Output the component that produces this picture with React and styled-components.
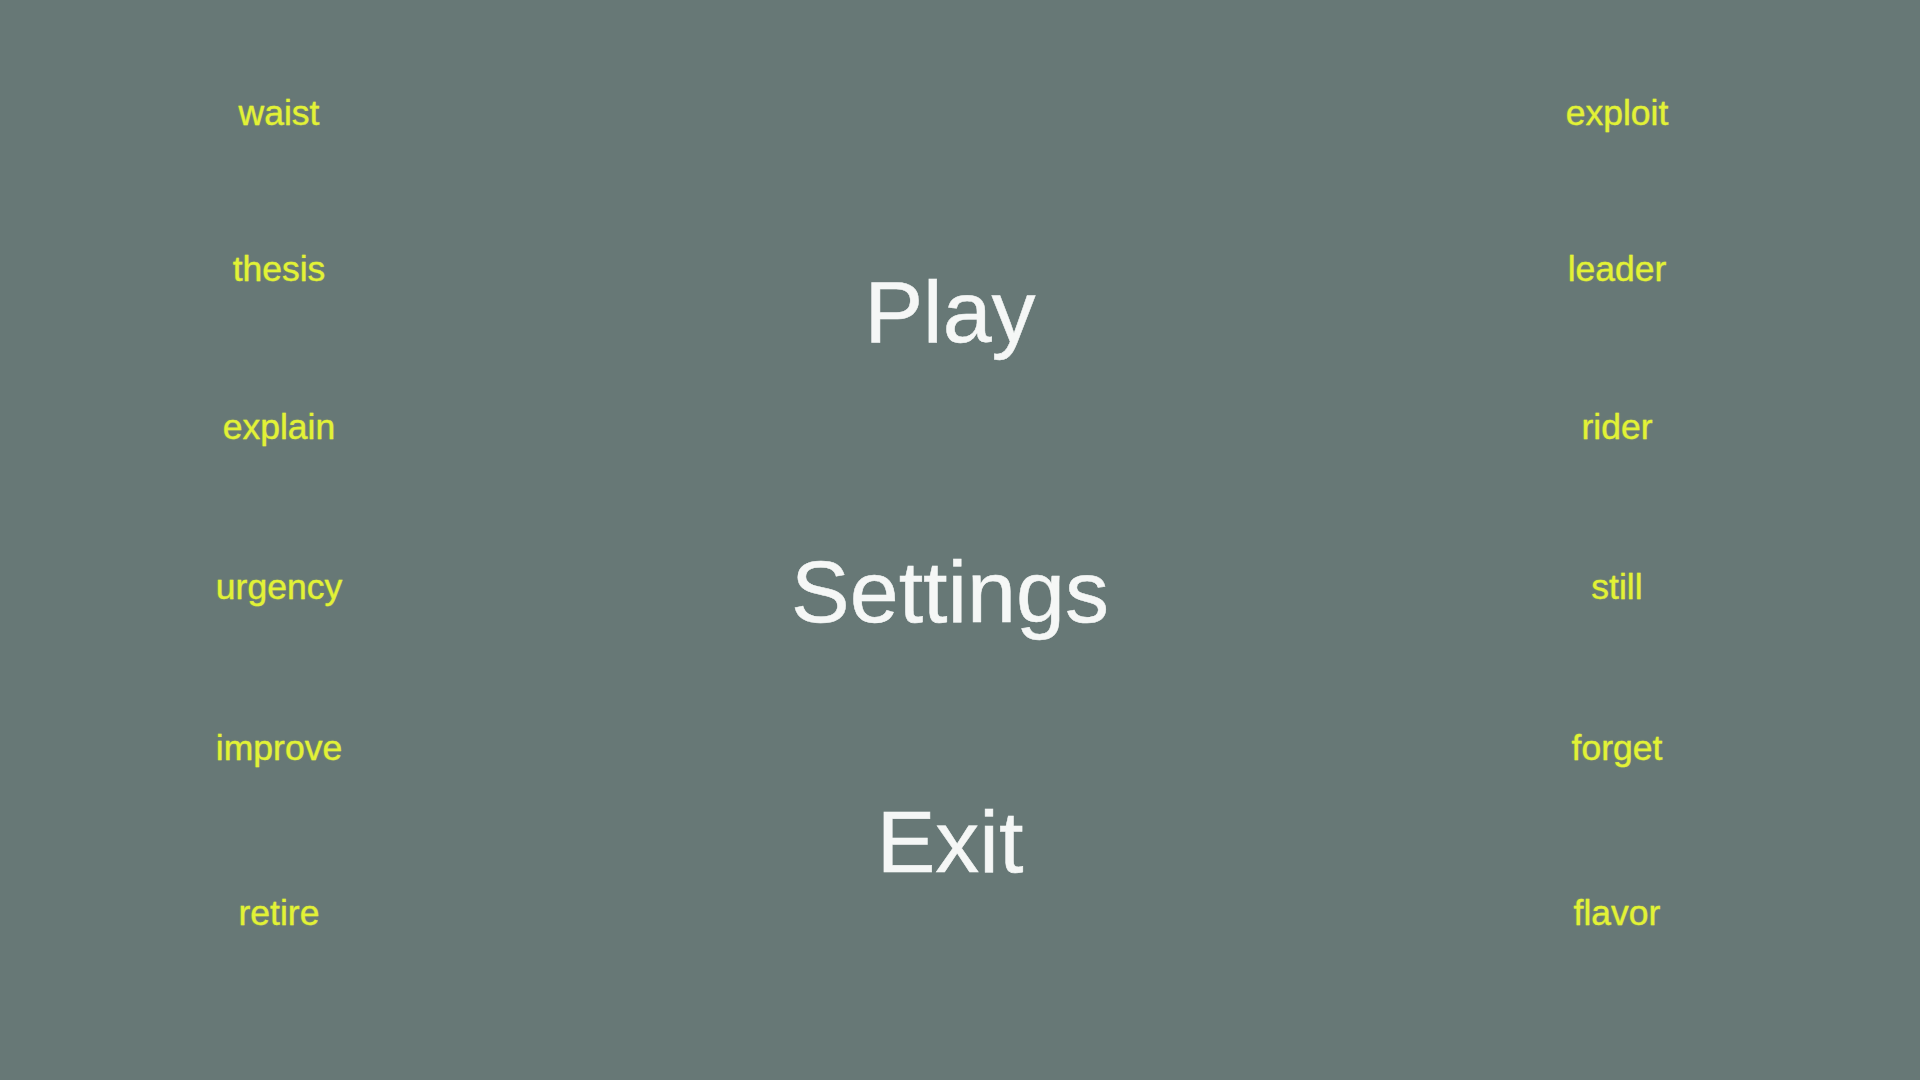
import React from "react";
import styled, { createGlobalStyle } from "styled-components";

const leftWords = ["waist", "thesis", "explain", "urgency", "improve", "retire"];
const rightWords = ["exploit", "leader", "rider", "still", "forget", "flavor"];
// space above each word row, so the list spreads slightly toward the bottom
const wordGaps = [0, 116, 118, 120, 121, 125];

const menu = [
  { label: "Play", gap: 0 },
  { label: "Settings", gap: 180 },
  { label: "Exit", gap: 150 },
];

const GlobalStyle = createGlobalStyle`
  html, body {
    margin: 0;
    padding: 0;
    background: #677876;
  }
  body {
    font-family: "Liberation Sans", Arial, sans-serif;
  }
`;

export default function App() {
  return (
    <>
      <GlobalStyle />
      <Screen>
        <WordColumn>
          {leftWords.map((w, i) => (
            <Word key={w} $gap={wordGaps[i]}>
              {w}
            </Word>
          ))}
        </WordColumn>
        <Menu>
          {menu.map((m) => (
            <MenuItem key={m.label} $gap={m.gap}>
              {m.label}
            </MenuItem>
          ))}
        </Menu>
        <WordColumn>
          {rightWords.map((w, i) => (
            <Word key={w} $gap={wordGaps[i]}>
              {w}
            </Word>
          ))}
        </WordColumn>
      </Screen>
    </>
  );
}

const Screen = styled.main`
  width: 1920px;
  height: 1080px;
  overflow: hidden;
  background: #677876;
  display: grid;
  grid-template-columns: 558px 784px 550px;
  align-items: start;
`;

const WordColumn = styled.ul`
  list-style: none;
  margin: 0;
  padding: 93px 0 0;
  display: flex;
  flex-direction: column;
  align-items: center;
`;

const Word = styled.li`
  margin-top: ${(p) => p.$gap}px;
  height: 40px;
  line-height: 40px;
  font-size: 35.5px;
  color: #e2f236;
  -webkit-text-stroke: 0.3px #e2f236;
  text-shadow: 0 0 2px rgba(226, 242, 54, 0.35);
  white-space: nowrap;
`;

const Menu = styled.nav`
  padding-top: 262px;
  display: flex;
  flex-direction: column;
  align-items: center;
`;

const MenuItem = styled.button`
  margin-top: ${(p) => p.$gap}px;
  height: 100px;
  line-height: 100px;
  padding: 0;
  border: none;
  background: none;
  font-family: "Liberation Sans", Arial, sans-serif;
  font-size: 88px;
  color: #f5f7f6;
  -webkit-text-stroke: 0.5px #f5f7f6;
  cursor: pointer;
`;
